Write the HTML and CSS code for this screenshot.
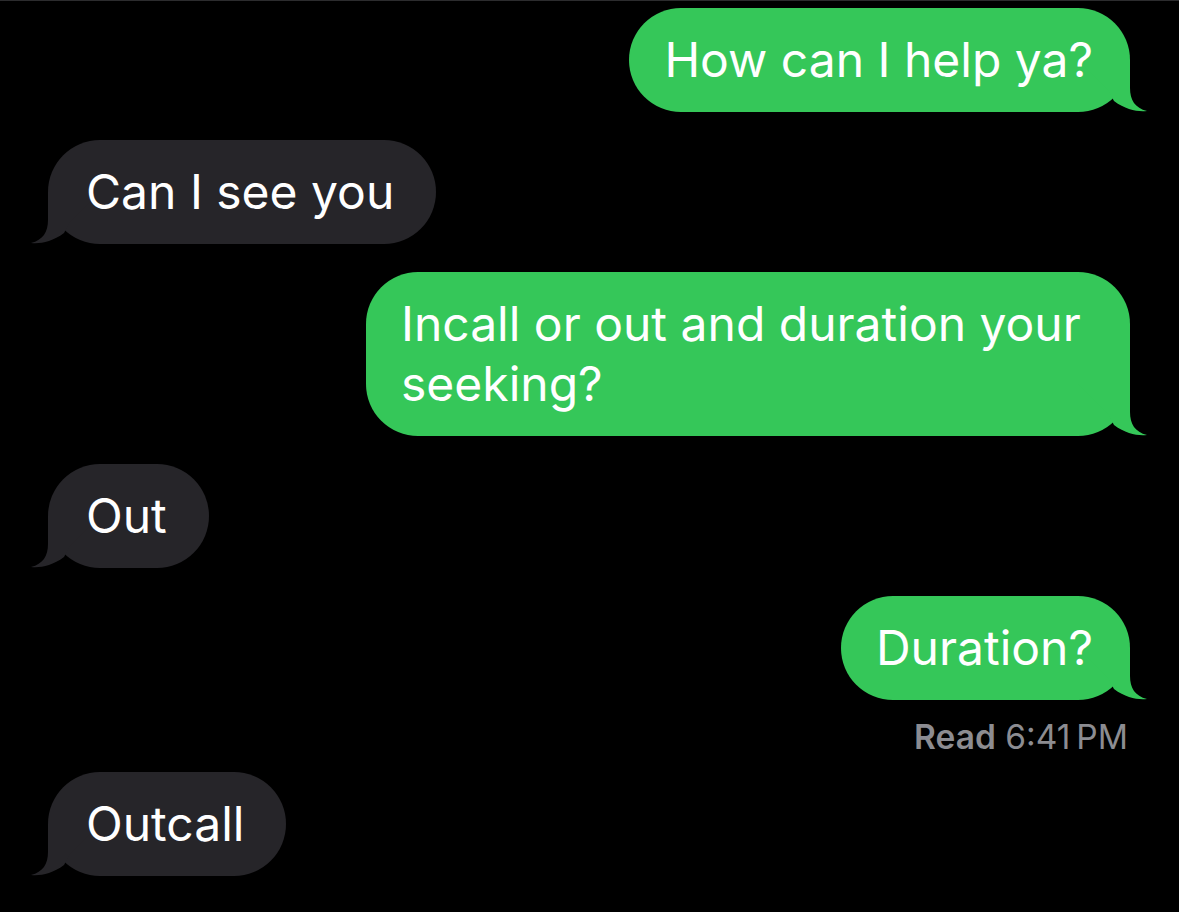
FILE: index.html
```html
<!DOCTYPE html>
<html lang="en">
<head>
<meta charset="utf-8">
<title>Messages</title>
<link rel="stylesheet" href="styles.css">
</head>
<body>
<main class="thread">
  <div class="bubble sent"><svg class="tail" viewBox="0 0 70 52" aria-hidden="true"><path d="M0 0H52V28C52 40 57 48 69 51C60 52 48 50 36 41L30 30Z"/></svg><span class="text">How can I help ya?</span></div>
  <div class="bubble recv"><svg class="tail" viewBox="0 0 70 52" aria-hidden="true"><path d="M0 0H52V28C52 40 57 48 69 51C60 52 48 50 36 41L30 30Z"/></svg><span class="text">Can I see you</span></div>
  <div class="bubble sent wide"><svg class="tail" viewBox="0 0 70 52" aria-hidden="true"><path d="M0 0H52V28C52 40 57 48 69 51C60 52 48 50 36 41L30 30Z"/></svg><span class="text">Incall or out and duration your seeking?</span></div>
  <div class="bubble recv"><svg class="tail" viewBox="0 0 70 52" aria-hidden="true"><path d="M0 0H52V28C52 40 57 48 69 51C60 52 48 50 36 41L30 30Z"/></svg><span class="text">Out</span></div>
  <div class="bubble sent"><svg class="tail" viewBox="0 0 70 52" aria-hidden="true"><path d="M0 0H52V28C52 40 57 48 69 51C60 52 48 50 36 41L30 30Z"/></svg><span class="text">Duration?</span></div>
  <div class="read"><b>Read</b> 6:41&#8201;PM</div>
  <div class="bubble recv"><svg class="tail" viewBox="0 0 70 52" aria-hidden="true"><path d="M0 0H52V28C52 40 57 48 69 51C60 52 48 50 36 41L30 30Z"/></svg><span class="text">Outcall</span></div>
</main>
</body>
</html>
```
FILE: styles.css
```css
html, body {
  margin: 0;
  padding: 0;
  background: #000;
}
body {
  border-top: 1px solid #2c2c2e;
  font-family: Inter, "Noto Sans", sans-serif;
  color: #fff;
}
.thread {
  display: flex;
  flex-direction: column;
  gap: 28px;
  padding: 7px 49px 0 48px;
}
.bubble {
  position: relative;
  font-size: 48px;
  line-height: 60px;
  padding: 22px 38px 22px 38px;
  border-radius: 52px;
}
.text {
  position: relative;
}
.sent {
  align-self: flex-end;
  background: #35c759;
  padding-left: 35px;
  padding-right: 37px;
}
.recv {
  align-self: flex-start;
  background: #262529;
  padding-right: 42px;
}
.wide {
  width: 692px;
}
.tail {
  position: absolute;
  bottom: 0;
  width: 70px;
  height: 52px;
}
.sent .tail {
  right: -18px;
  fill: #35c759;
}
.recv .tail {
  left: -18px;
  fill: #262529;
  transform: scaleX(-1);
}
.read {
  align-self: flex-end;
  margin: -10px 2px -12px 0;
  font-size: 33.5px;
  line-height: 38px;
  color: #8c8c91;
}
.read b {
  font-weight: 600;
}
```
